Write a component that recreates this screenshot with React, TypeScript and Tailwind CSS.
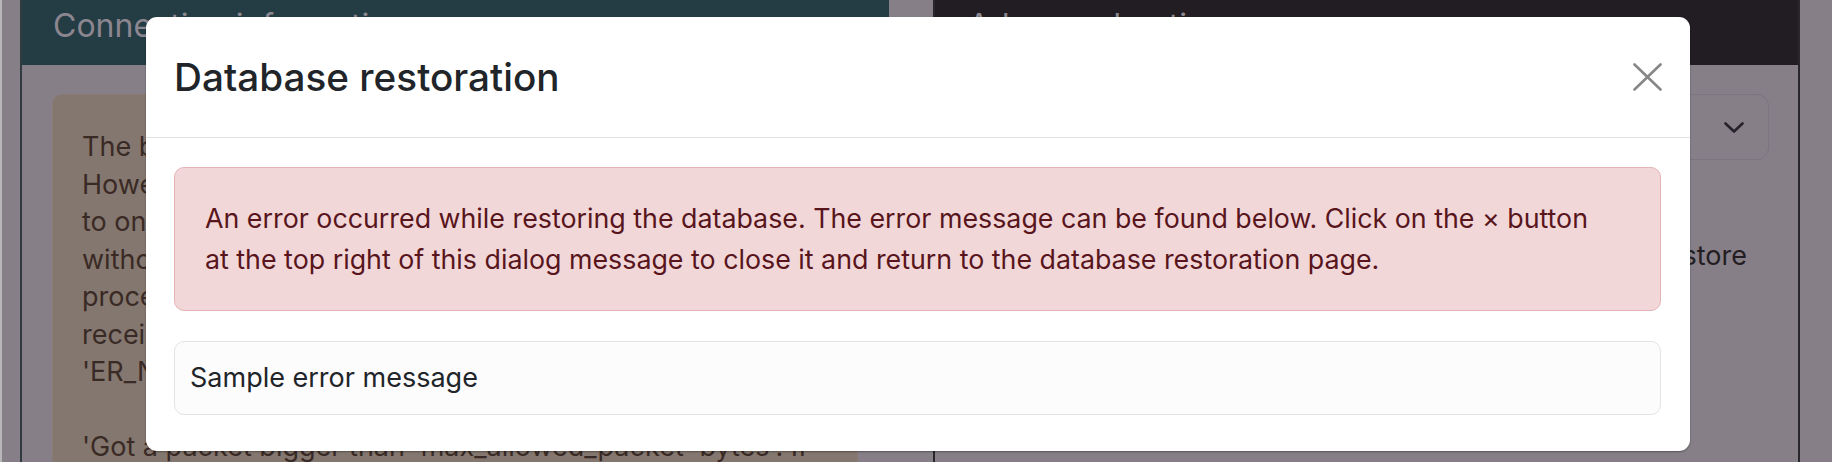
import React from "react";

const font = { fontFamily: "Inter, 'Noto Sans', sans-serif" };

export default function App() {
  const leftLines = [
    "The backup file may be restored directly from this page.",
    "However, if the file is too large, it may be necessary",
    "to only restore the structure of the database first,",
    "without any data. Otherwise, the database server may",
    "process the request and fail after a long time, or",
    "receive a packet that is too big, returning the error",
    "'ER_NET_PACKET_TOO_LARGE' with the message:",
  ];
  return (
    <div
      className="relative w-[1832px] h-[462px] overflow-hidden bg-[#867f88] flex"
      style={font}
    >
      {/* window edge */}
      <div className="w-[2px] h-full shrink-0 bg-[#b9b6ba]" />
      <div className="w-[18px] h-full shrink-0" />

      {/* left panel */}
      <div className="w-[869px] shrink-0 h-full overflow-hidden border-l-2 border-[#2f3b40] flex flex-col">
        <div className="h-[65px] shrink-0 bg-[#243c44] pl-[31px] flex items-start pt-[6px]">
          <span className="text-[32px] leading-[40px] text-[#8c8690]">
            Connection information
          </span>
        </div>
        <div className="shrink-0 pt-[29px] pl-[30px] pr-[31px]">
          <div className="rounded-[10px] border border-[#8a7b73] bg-[#84776f] pl-[29px] pt-[33px] h-[400px] text-[27px] leading-[37.5px] text-[#3a2a25]">
            {leftLines.map((l, i) => (
              <div key={i} className="whitespace-nowrap">
                {l}
              </div>
            ))}
            <div className="mt-[37.5px] whitespace-nowrap">
              'Got a packet bigger than 'max_allowed_packet' bytes'. If
            </div>
          </div>
        </div>
      </div>

      {/* gap */}
      <div className="w-[44px] h-full shrink-0" />

      {/* right panel */}
      <div className="w-[867px] shrink-0 h-full overflow-hidden border-x-2 border-[#2a272c] flex flex-col">
        <div className="h-[65px] shrink-0 bg-[#221d22] pl-[33px] flex items-start pt-[6px]">
          <span className="text-[32px] leading-[40px] text-[#8c8690]">
            Advanced options
          </span>
        </div>
        <div className="shrink-0 pt-[29px] pl-[33px] pr-[29px]">
          <div className="h-[66px] rounded-[12px] border border-[#7b7580] flex items-center justify-end pr-[24px]">
            <svg width="20" height="11" viewBox="0 0 20 11" fill="none">
              <path
                d="M1.5 1.5 L10 9.5 L18.5 1.5"
                stroke="#26222a"
                strokeWidth="2.6"
                strokeLinecap="round"
                strokeLinejoin="round"
              />
            </svg>
          </div>
          <p className="mt-[74px] text-right pr-[22px] whitespace-nowrap text-[27px] leading-[43px] text-[#231d22]">
            Select the backup file that you want to restore
          </p>
        </div>
      </div>

      {/* modal */}
      <div className="absolute left-[146px] top-[17px] w-[1544px] h-[434px] bg-white rounded-[11px] shadow-[0_1px_2px_rgba(0,0,0,0.35)] flex flex-col">
        <div className="h-[121px] shrink-0 border-b border-[#e3e3e3] flex items-center justify-between pl-[28px] pr-[28px]">
          <h5 className="text-[38.7px] leading-[48px] font-medium text-[#212529]">
            Database restoration
          </h5>
          <svg width="29" height="28" viewBox="0 0 29 28" fill="none">
            <path
              d="M1.5 1.5 L27.5 26.5 M27.5 1.5 L1.5 26.5"
              stroke="#878787"
              strokeWidth="2.6"
              strokeLinecap="round"
            />
          </svg>
        </div>
        <div className="pt-[29px] pl-[28px] pr-[29px]">
          <div className="rounded-[10px] border border-[#e6b3b7] bg-[#f2d7d9] px-[30px] py-[30px] text-[26.8px] leading-[41px] text-[#58151c]">
            <div className="whitespace-nowrap">
              An error occurred while restoring the database. The error message can be found below. Click on the × button
            </div>
            <div className="whitespace-nowrap">
              at the top right of this dialog message to close it and return to the database restoration page.
            </div>
          </div>
          <div className="mt-[30px] rounded-[10px] border border-[#e4e4e4] bg-[#fcfcfc] pl-[15px] py-[14px] text-[27px] leading-[44px] text-[#212529]">
            Sample error message
          </div>
        </div>
      </div>
    </div>
  );
}
